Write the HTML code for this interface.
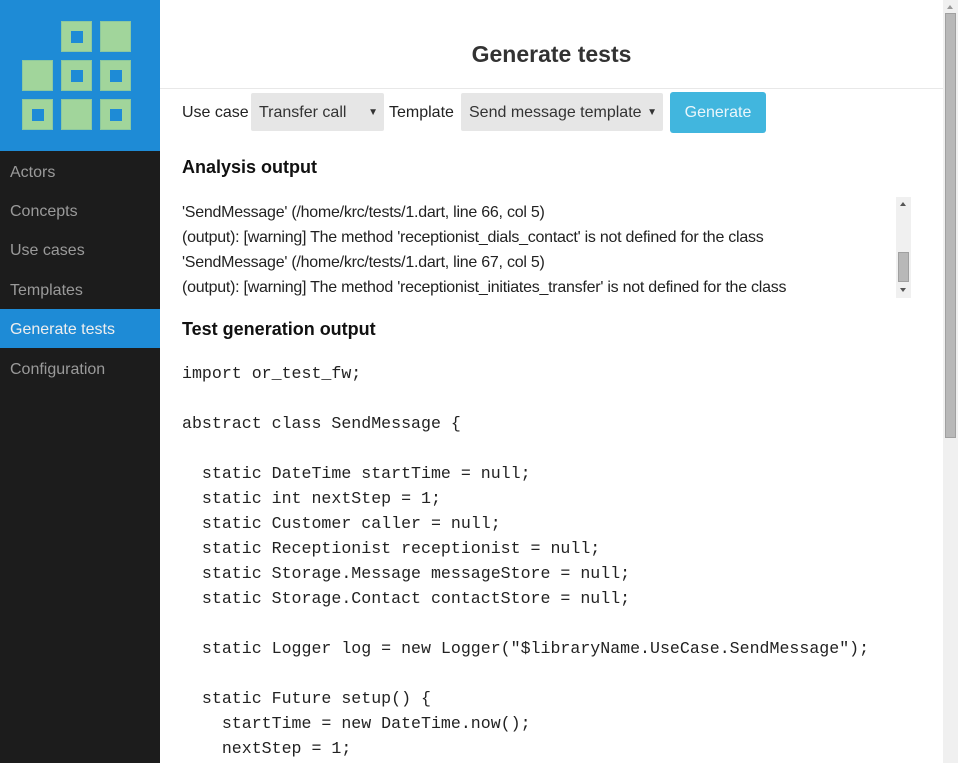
<!DOCTYPE html>
<html><head><meta charset="utf-8"><style>
*{margin:0;padding:0;box-sizing:border-box}
body{width:958px;height:763px;overflow:hidden;background:#fff;font-family:"Liberation Sans",sans-serif;color:#222;position:relative}
.side{position:absolute;left:0;top:0;width:160px;height:763px;background:#1c1c1c}
.logo{position:absolute;left:0;top:0;width:160px;height:151px;background:#1e8bd6}
.sq{position:absolute;width:31px;height:31px;background:#a1d59b;border:1px solid #8cc8a0}
.sq i{position:absolute;left:9px;top:9px;width:12px;height:12px;background:#1e8bd6}
.nav{position:absolute;left:0;width:160px;height:39px;line-height:41px;padding-left:10px;font-size:16px;color:#9a9a9a}
.nav.act{background:#1e8bd6;color:#eee}
h1{position:absolute;left:160px;width:783px;top:41px;text-align:center;font-size:23px;font-weight:bold;color:#333}
.hr{position:absolute;left:160px;top:88px;width:783px;height:1px;background:#e8e8e8}
.t{position:absolute;font-size:16px;white-space:nowrap}
.sel{position:absolute;top:93px;height:38px;background:#e6e6e6;border-radius:2px;font-size:16px;line-height:39px;padding-left:8px;color:#333}
.sel b{position:absolute;right:6px;font-size:10px;font-weight:normal}
.btn{position:absolute;left:670px;top:92px;width:96px;height:41px;background:#41b6de;border-radius:3px;color:#eaf6fb;font-size:16px;line-height:41px;text-align:center}
h2{position:absolute;left:182px;font-size:18px;font-weight:bold;color:#111}
.an{position:absolute;left:182px;top:200px;font-size:16px;line-height:25px;color:#222;white-space:nowrap;letter-spacing:-0.25px}
.isb{position:absolute;left:896px;top:197px;width:15px;height:101px;background:#f0f0f0}
.code{position:absolute;left:182px;top:361px;font-family:"Liberation Mono",monospace;font-size:16.6px;line-height:25px;white-space:pre;color:#222}
.msb{position:absolute;left:943px;top:0;width:15px;height:763px;background:#f0f0f0}
</style></head><body>
<div class="side">
<div class="logo">
<div class="sq" style="left:61px;top:21px"><i></i></div>
<div class="sq" style="left:100px;top:21px"></div>
<div class="sq" style="left:22px;top:60px"></div>
<div class="sq" style="left:61px;top:60px"><i></i></div>
<div class="sq" style="left:100px;top:60px"><i></i></div>
<div class="sq" style="left:22px;top:99px"><i></i></div>
<div class="sq" style="left:61px;top:99px"></div>
<div class="sq" style="left:100px;top:99px"><i></i></div>
</div>
<div class="nav" style="top:152px">Actors</div>
<div class="nav" style="top:191px">Concepts</div>
<div class="nav" style="top:230px">Use cases</div>
<div class="nav" style="top:270px">Templates</div>
<div class="nav act" style="top:309px">Generate tests</div>
<div class="nav" style="top:349px">Configuration</div>
</div>
<h1>Generate tests</h1>
<div class="hr"></div>
<div class="t" style="left:182px;top:104px">Use case</div>
<div class="sel" style="left:251px;width:133px">Transfer call<b>▼</b></div>
<div class="t" style="left:389px;top:104px">Template</div>
<div class="sel" style="left:461px;width:202px">Send message template<b>▼</b></div>
<div class="btn">Generate</div>
<h2 style="top:157px">Analysis output</h2>
<div class="an">'SendMessage' (/home/krc/tests/1.dart, line 66, col 5)<br>(output): [warning] The method 'receptionist_dials_contact' is not defined for the class<br>'SendMessage' (/home/krc/tests/1.dart, line 67, col 5)<br>(output): [warning] The method 'receptionist_initiates_transfer' is not defined for the class</div>
<div class="isb"><div style="position:absolute;left:4px;top:5px;border:3.5px solid transparent;border-bottom:4px solid #555;border-top:0"></div><div style="position:absolute;left:2px;top:55px;width:11px;height:30px;background:#b8b8b8;border:1px solid #a0a0a0"></div><div style="position:absolute;left:4px;top:91px;border:3.5px solid transparent;border-top:4px solid #555;border-bottom:0"></div></div>
<h2 style="top:319px">Test generation output</h2>
<div class="code">import or_test_fw;

abstract class SendMessage {

  static DateTime startTime = null;
  static int nextStep = 1;
  static Customer caller = null;
  static Receptionist receptionist = null;
  static Storage.Message messageStore = null;
  static Storage.Contact contactStore = null;

  static Logger log = new Logger("$libraryName.UseCase.SendMessage");

  static Future setup() {
    startTime = new DateTime.now();
    nextStep = 1;</div>
<div class="msb"><div style="position:absolute;left:4px;top:5px;border:3.5px solid transparent;border-bottom:4px solid #999;border-top:0"></div><div style="position:absolute;left:2px;top:13px;width:11px;height:425px;background:#b8b8b8;border:1px solid #a0a0a0"></div></div>
</body></html>
